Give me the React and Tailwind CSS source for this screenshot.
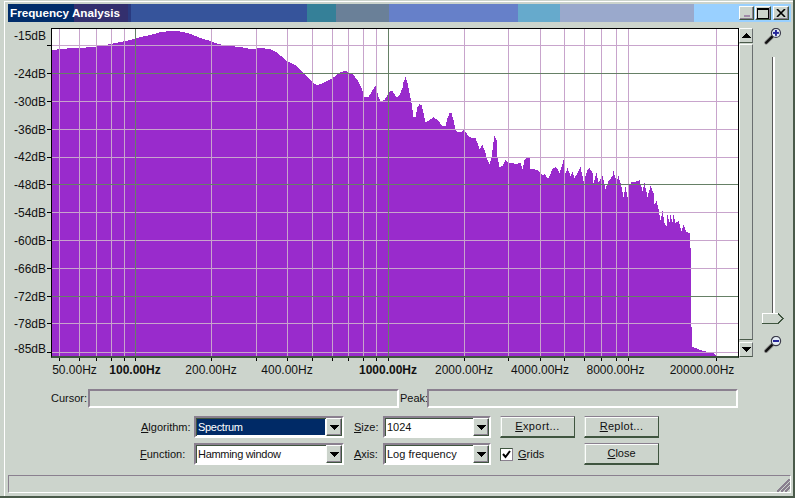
import React from "react";

const points = [
  [52, 50], [60, 49], [72, 48], [80, 48], [90, 47], [100, 46], [110, 44], [120, 42], [130, 40], [140, 37], [150, 35], [160, 32], [170, 31], [176, 31], [183, 32], [190, 34], [200, 38], [210, 41], [218, 44], [230, 46], [240, 47], [250, 49], [260, 48], [270, 49], [276, 52], [285, 60], [295, 65], [305, 75], [313, 83], [317, 85], [325, 82], [332, 78], [340, 72], [345, 71], [352, 74], [357, 80], [361, 88], [364, 97], [368, 97], [372, 90], [375, 86], [378, 97], [380, 101], [384, 100], [387, 95], [390, 91], [392, 91], [395, 96], [397, 97], [399, 95], [402, 88], [403, 82], [405, 77], [407, 83], [409, 93], [411, 103], [413, 117], [415, 117], [417, 107], [419, 104], [421, 105], [423, 113], [425, 122], [428, 121], [433, 117], [437, 120], [442, 126], [445, 126], [447, 118], [449, 113], [451, 113], [453, 120], [455, 129], [457, 132], [461, 132], [463, 130], [465, 132], [468, 136], [472, 138], [475, 138], [477, 143], [479, 149], [482, 145], [484, 150], [487, 160], [489, 164], [491, 158], [493, 142], [494, 136], [496, 140], [497, 157], [499, 167], [502, 166], [505, 160], [508, 163], [512, 163], [515, 164], [520, 163], [522, 169], [524, 160], [527, 157], [529, 157], [530, 169], [533, 169], [537, 170], [539, 172], [542, 175], [544, 174], [547, 178], [548, 178], [552, 169], [555, 167], [557, 169], [559, 173],
  [561, 167], [563, 160], [565, 173], [567, 168], [570, 176], [572, 172], [574, 178], [577, 173], [580, 167], [583, 181], [587, 170], [589, 168], [592, 173], [593, 183], [596, 173], [598, 182], [602, 176], [605, 189], [608, 181], [612, 176], [613, 171], [616, 182], [618, 176], [621, 187], [623, 197], [625, 187], [627, 197], [629, 185], [631, 182], [634, 182], [637, 181], [639, 180], [642, 191], [644, 183], [647, 197], [650, 186], [653, 193], [654, 204], [656, 201], [658, 209], [660, 220], [662, 211], [664, 223], [666, 226], [667, 215], [669, 222], [670, 215], [672, 222], [673, 215], [675, 223], [678, 221], [681, 231], [683, 225], [686, 232], [689, 233], [690, 248], [691, 327], [692, 347], [695, 348], [700, 350], [707, 352], [713, 353], [716, 356],
];

const heightAt = (x) => {
  for (let i = 1; i < points.length; i++) {
    const [x0, y0] = points[i - 1];
    const [x1, y1] = points[i];
    if (x <= x1) return Math.round(y0 + ((y1 - y0) * (x - x0)) / (x1 - x0));
  }
  return 357;
};

let spectrum = "M0 328";
for (let x = 52; x <= 716; x++) {
  spectrum += `V${heightAt(x) - 29}H${x - 51}`;
}
spectrum += "V328Z";

const pinkY = [45, 101, 129, 157, 212, 240, 268, 323, 352];
const greenY = [73, 184, 296];
const pinkX = [59, 79, 96, 111, 124, 211, 256, 287, 312, 332, 348, 363, 376, 464, 508, 540, 564, 584, 601, 616, 628, 716];
const greenX = [135, 388];

const yLabels = [
  ["-15dB", 36], ["-24dB", 74], ["-30dB", 102], ["-36dB", 130], ["-42dB", 157], ["-48dB", 185],
  ["-54dB", 213], ["-60dB", 241], ["-66dB", 269], ["-72dB", 297], ["-78dB", 324], ["-85dB", 349],
];

const xLabels = [
  ["50.00Hz", 74.5], ["100.00Hz", 135, true], ["200.00Hz", 211], ["400.00Hz", 287], ["1000.00Hz", 388, true],
  ["2000.00Hz", 464], ["4000.00Hz", 540], ["8000.00Hz", 615.5], ["20000.00Hz", 702],
];

const raised = "border border-t-[#fbfdfb] border-l-[#fbfdfb] border-r-[#3f553f] border-b-[#3f553f] shadow-[inset_-1px_-1px_0_#8a808f]";
const scrollPart = "border border-t-[#fbfdfb] border-l-[#fbfdfb] border-r-[#6a6f70] border-b-[#4a5a4a]";
const sunken = "border-2 border-t-[#8a808f] border-l-[#8a808f] border-r-white border-b-white";

const Key = ({ children }) => <span className="underline">{children}</span>;

const Triangle = ({ up }) => (
  <svg width="9" height="5" viewBox="0 0 9 5" shapeRendering="crispEdges">
    <path d={up ? "M4.5 0L9 5H0Z" : "M0 0H9L4.5 5Z"} fill="#000" />
  </svg>
);

const Magnifier = ({ plus }) => (
  <svg width="22" height="22" viewBox="0 0 22 22">
    <path d="M10 9L4 15" stroke="#8a8a8a" strokeWidth="4" strokeLinecap="round" />
    <path d="M10 9L4 15" stroke="#111" strokeWidth="2.4" strokeLinecap="round" />
    <circle cx="14" cy="5" r="4.6" fill="#e4ecf4" stroke="#3a3a4a" strokeWidth="1.2" />
    <path d="M11 5H17" stroke="#26269a" strokeWidth="2" />
    {plus && <path d="M14 2V8" stroke="#26269a" strokeWidth="2" />}
  </svg>
);

const Select = ({ value, selected, tight }) => (
  <div className={`flex h-[22px] bg-white ${sunken} shadow-[inset_1px_1px_0_#3f553f]`}>
    <div className="flex min-w-0 flex-1 items-center p-px">
      <span className={`flex h-full flex-1 items-center pl-[1px] ${selected ? "bg-[#002a66] text-white" : ""} ${tight ? "tracking-[-0.3px]" : ""}`}>{value}</span>
    </div>
    <div className={`flex w-[16px] items-center justify-center bg-[#ccd4cc] ${raised}`}>
      <Triangle />
    </div>
  </div>
);

const Button = ({ children }) => (
  <button className="flex h-[22px] w-[75px] items-center justify-center border border-t-[#8a808f] border-l-[#d8e0d8] border-r-[#3f553f] border-b-[#3f553f] border-b-2 bg-[#ccd4cc] shadow-[inset_1px_1px_0_#fbfdfb]">
    {children}
  </button>
);

export default function App() {
  return (
    <div className="h-[500px] w-[800px] bg-white font-['Liberation_Sans',Arial,sans-serif] text-[11px] text-[#111]">
      <div className="h-[498px] w-[795px] border-r-2 border-b-2 border-r-[#4a5a4a] border-b-[#4a5a4a] bg-[#ccd4cc] pt-px pl-1">
        <div className="h-full border-t border-l border-white pt-[2px] pl-[3px]">
          {/* title bar */}
          <div className="flex h-[18px] w-[783px] items-center justify-between bg-[linear-gradient(to_right,#002c6a_66px,#332f6e_66px,#332f6e_120px,#2a3a80_120px,#2a3a80_123px,#36549b_123px,#36549b_299px,#358098_299px,#358098_328px,#6a8098_328px,#6a8098_381px,#6680c9_381px,#6680c9_510px,#66aacc_510px,#66aacc_552px,#9aa9cc_552px,#9aa9cc_686px,#99d0ff_686px)]">
            <span className="pl-[2px] text-[11.7px] font-bold text-white">Frequency Analysis</span>
            <div className="flex h-[14px] pr-[2px]">
              <div className={`flex w-[15px] items-end justify-center bg-[#ccd4cc] pb-[2px] ${raised}`}>
                <div className="h-[2px] w-[6px] bg-[#a08aa8]" />
              </div>
              <div className={`ml-px flex w-[16px] items-center justify-center bg-[#ccd4cc] ${raised}`}>
                <div className="h-[11px] w-[12px] border border-t-2 border-black" />
              </div>
              <div className={`ml-[2px] flex w-[16px] items-center justify-center bg-[#ccd4cc] ${raised}`}>
                <svg width="10" height="8" viewBox="0 0 10 8">
                  <path d="M1 0L9 8M9 0L1 8" stroke="#000" strokeWidth="1.6" />
                </svg>
              </div>
            </div>
          </div>

          {/* plot row */}
          <div className="mt-[6px] flex h-[330px]">
            <div className="relative w-[43px]">
              {yLabels.map(([label, y]) => (
                <span key={label} className="absolute right-[5px] -translate-y-1/2 text-[12px] leading-none" style={{ top: y - 28 }}>
                  {label}
                </span>
              ))}
              {[...pinkY, ...greenY].map((y) => (
                <div key={y} className="absolute right-0 h-px w-[4px] bg-black" style={{ top: y - 28 }} />
              ))}
            </div>
            <div className="h-[330px] w-[688px] border border-b-2 border-black border-b-[#3f553f]">
              <svg width="686" height="327" viewBox="0 0 686 327" shapeRendering="crispEdges" className="block">
                <rect width="686" height="327" fill="#fff" />
                <path d={spectrum} fill="#992bcc" />
                {pinkX.map((x) => (
                  <rect key={x} x={x - 52} width="1" height="327" fill="#c8a4cc" />
                ))}
                {pinkY.map((y) => (
                  <rect key={y} y={y - 29} width="686" height="1" fill="#c8a4cc" />
                ))}
                {greenX.map((x) => (
                  <rect key={x} x={x - 52} width="1" height="327" fill="#668066" />
                ))}
                {greenY.map((y) => (
                  <rect key={y} y={y - 29} width="686" height="1" fill="#668066" />
                ))}
              </svg>
            </div>
            {/* scrollbar */}
            <div className="flex h-[329px] w-[14px] flex-col">
              <div className={`flex h-[15px] items-center justify-center ${scrollPart}`}>
                <Triangle up />
              </div>
              <div className={`mt-px flex-1 ${scrollPart}`} />
              <div className={`mt-[2px] flex h-[15px] items-center justify-center ${scrollPart}`}>
                <Triangle />
              </div>
            </div>
            {/* zoom slider */}
            <div className="flex h-[330px] w-[40px] flex-col items-center">
              <Magnifier plus />
              <div className="mt-[7px] h-[261px] w-[3px] border-l border-[#5a5a5a] border-r-2 border-r-white" />
              <svg width="22" height="11" viewBox="0 0 22 11" shapeRendering="crispEdges" className="shrink-0">
                <path d="M.5.5H16L21 5.5L16 10.5H.5Z" fill="#ccd4cc" stroke="#3f553f" />
                <path d="M.5 9.5V.5H16" fill="none" stroke="#fff" />
              </svg>
              <div className="mt-[12px]">
                <Magnifier />
              </div>
            </div>
          </div>

          {/* frequency axis */}
          <div className="relative h-[31px]">
            {[...pinkX, ...greenX].map((x) => (
              <div key={x} className="absolute top-0 h-[3px] w-px bg-black" style={{ left: x - 8 }} />
            ))}
            {xLabels.map(([label, x, bold]) => (
              <span
                key={label}
                className={`absolute top-[5px] -translate-x-1/2 text-[12px] leading-[14px] ${bold ? "font-bold" : ""}`}
                style={{ left: x - 8 }}
              >
                {label}
              </span>
            ))}
          </div>

          {/* cursor and peak */}
          <div className="flex h-[19px] items-center pl-[43px]">
            <span className="w-[37px]">Cursor:</span>
            <div className={`h-[19px] w-[311px] ${sunken}`} />
            <span className="ml-px w-[27px]">Peak:</span>
            <div className={`h-[19px] w-[311px] ${sunken}`} />
          </div>

          {/* controls */}
          <div className="mt-[8px] grid grid-cols-[54px_150px_39px_108px_84px_84px] items-center gap-y-[5px] pl-[132px]">
            <span className="pl-px"><Key>A</Key>lgorithm:</span>
            <Select value="Spectrum" selected tight />
            <span className="pl-[10px]"><Key>S</Key>ize:</span>
            <Select value="1024" />
            <div className="pl-[9px]"><Button><span className="tracking-[0.4px]"><Key>E</Key>xport...</span></Button></div>
            <div className="pl-[9px]"><Button><span className="tracking-[0.3px]"><Key>R</Key>eplot...</span></Button></div>

            <span><Key>F</Key>unction:</span>
            <Select value="Hamming window" tight />
            <span className="pl-[10px]"><Key>A</Key>xis:</span>
            <Select value="Log frequency" />
            <div className="flex items-center pl-[9px]">
              <div className="flex h-[13px] w-[13px] items-center justify-center border border-t-[#3f553f] border-r-[#8a808f] border-b-[#8a808f] border-l-[#3f553f] bg-white">
                <svg width="9" height="9" viewBox="0 0 9 9">
                  <path d="M1 4L3.5 7L8 1" fill="none" stroke="#000" strokeWidth="2" />
                </svg>
              </div>
              <span className="ml-[5px]"><Key>G</Key>rids</span>
            </div>
            <div className="pl-[9px]"><Button><span><Key>C</Key>lose</span></Button></div>
          </div>

          {/* status bar */}
          <div className="mt-[10px] flex h-[18px] w-[783px] items-end justify-end border border-t-[#8a808f] border-r-white border-b-white border-l-[#8a808f]">
            <svg width="13" height="13" viewBox="0 0 13 13" shapeRendering="crispEdges">
              <path d="M0 13L13 0M4 13L13 4M8 13L13 8" stroke="#8a808f" strokeWidth="2" fill="none" />
            </svg>
          </div>
        </div>
      </div>
    </div>
  );
}
